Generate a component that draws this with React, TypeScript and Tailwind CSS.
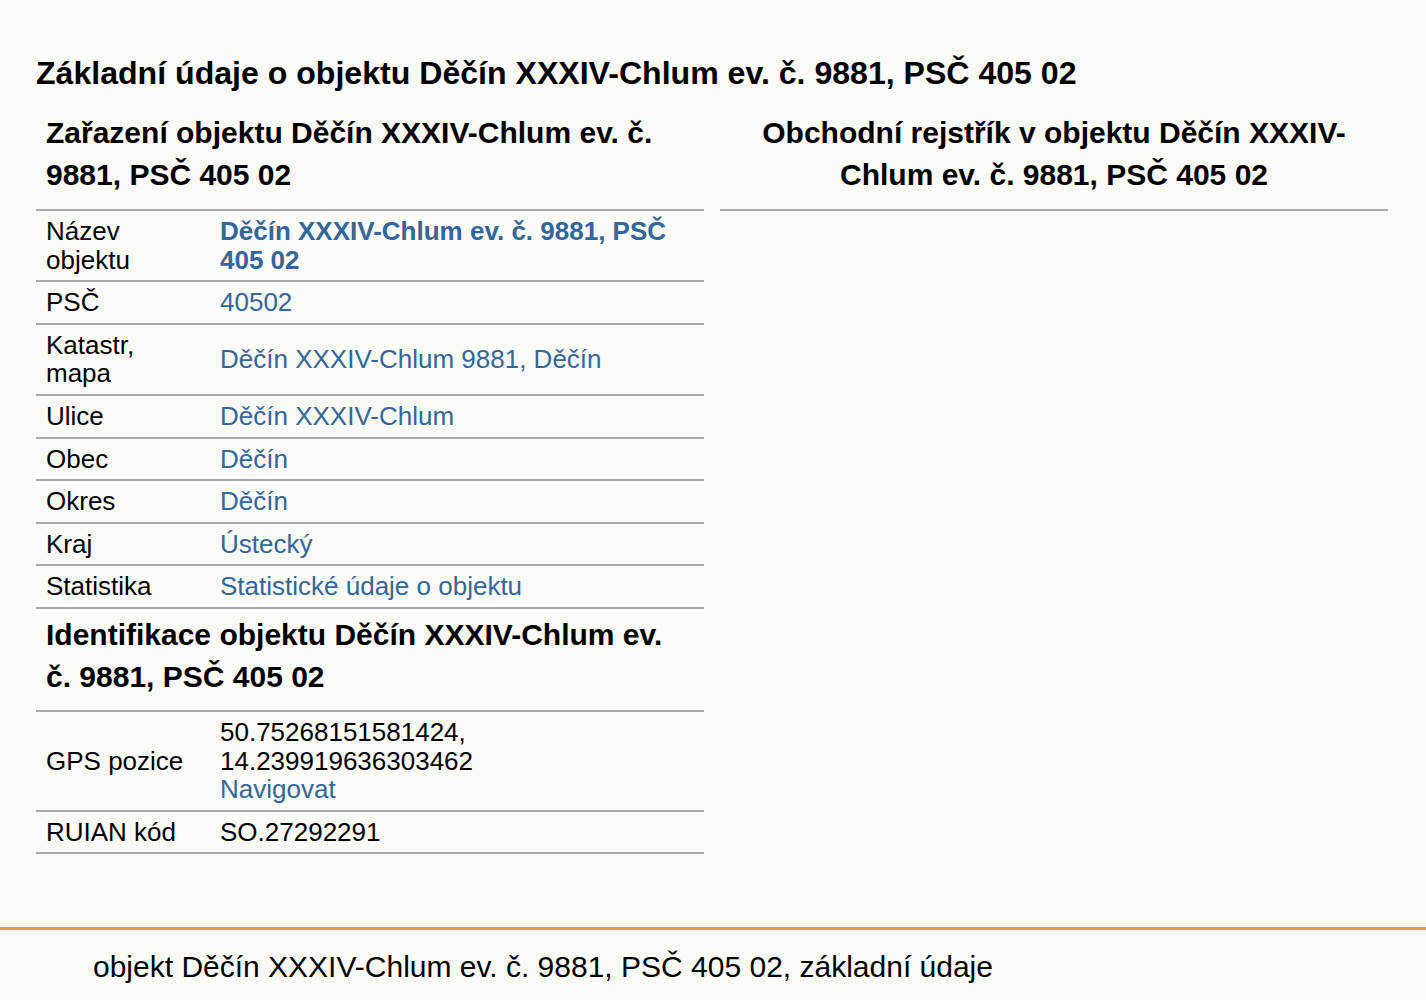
const rows: { label: string; value: string; bold?: boolean }[] = [
  { label: 'Název objektu', value: 'Děčín XXXIV-Chlum ev. č. 9881, PSČ 405 02', bold: true },
  { label: 'PSČ', value: '40502' },
  { label: 'Katastr, mapa', value: 'Děčín XXXIV-Chlum 9881, Děčín' },
  { label: 'Ulice', value: 'Děčín XXXIV-Chlum' },
  { label: 'Obec', value: 'Děčín' },
  { label: 'Okres', value: 'Děčín' },
  { label: 'Kraj', value: 'Ústecký' },
  { label: 'Statistika', value: 'Statistické údaje o objektu' },
];

function Row({ label, children }: { label: string; children: React.ReactNode }) {
  return (
    <div className="flex items-center border-b-2 border-[#a9a9a9] py-[6px]">
      <div className="w-[184px] shrink-0 pl-[10px] pr-[26px]">{label}</div>
      <div className="flex-1 pr-4">{children}</div>
    </div>
  );
}

function SectionHeading({ children, className }: { children: React.ReactNode; className: string }) {
  return (
    <h2 className={'border-b-2 border-[#a9a9a9] px-[10px] text-[30px] leading-[42px] font-bold ' + className}>
      {children}
    </h2>
  );
}

export default function App() {
  return (
    <div className="flex min-h-[1000px] flex-col bg-[#fafaf7] font-['Liberation_Sans',Arial,sans-serif] text-black">
      <div className="flex-1 px-[36px] pt-[51px]">
        <h1 className="text-[32.1px] leading-[45px] font-bold">
          Základní údaje o objektu Děčín XXXIV-Chlum ev. č. 9881, PSČ 405 02
        </h1>
        <div className="mt-[9px] grid w-[1352px] grid-cols-2 gap-x-[16px]">
          <div className="text-[26px] leading-[28.6px]">
            <SectionHeading className="pt-[7px] pb-[13px]">
              Zařazení objektu Děčín XXXIV-Chlum ev. č. 9881, PSČ 405 02
            </SectionHeading>
            {rows.map((r) => (
              <Row key={r.label} label={r.label}>
                <a className={r.bold ? 'font-bold text-[#336699]' : 'text-[#336699]'}>{r.value}</a>
              </Row>
            ))}
            <SectionHeading className="pt-[5px] pb-[12px]">
              Identifikace objektu Děčín XXXIV-Chlum ev. č. 9881, PSČ 405 02
            </SectionHeading>
            <Row label="GPS pozice">
              <div>50.75268151581424,</div>
              <div>14.239919636303462</div>
              <a className="text-[#336699]">Navigovat</a>
            </Row>
            <Row label="RUIAN kód">SO.27292291</Row>
          </div>
          <div className="text-[26px] leading-[28.6px]">
            <SectionHeading className="pt-[7px] pb-[13px] text-center">
              Obchodní rejstřík v objektu Děčín XXXIV-Chlum ev. č. 9881, PSČ 405 02
            </SectionHeading>
          </div>
        </div>
      </div>
      <footer className="border-t-[3px] border-[#daa520] pl-[93px] pt-[20px] pb-[16px] text-[30px] leading-[34px]">
        objekt Děčín XXXIV-Chlum ev. č. 9881, PSČ 405 02, základní údaje
      </footer>
    </div>
  );
}
